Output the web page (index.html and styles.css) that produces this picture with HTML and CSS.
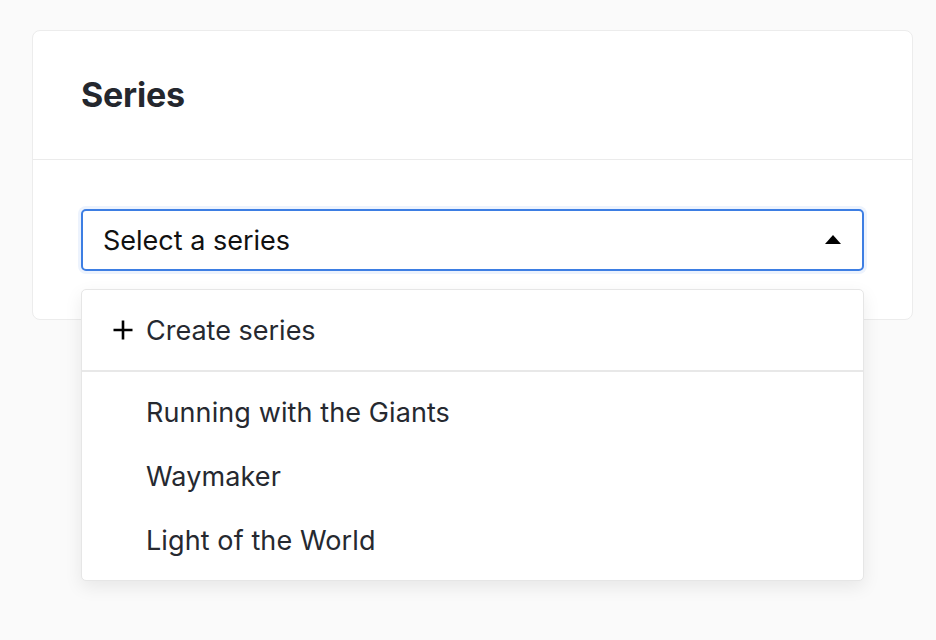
FILE: index.html
```html
<!DOCTYPE html>
<html>
<head>
<meta charset="utf-8">
<link rel="stylesheet" href="styles.css">
</head>
<body>
<div class="page">
  <div class="card">
    <div class="card-header"><h2 class="title">Series</h2></div>
    <div class="card-body">
      <div class="select-wrap">
        <div class="select">
          <span class="select-label">Select a series</span>
          <svg class="caret" width="16" height="9" viewBox="0 0 16 9"><path d="M0 9 L8 0 L16 9 Z" fill="#000"/></svg>
        </div>
        <div class="menu">
          <div class="menu-create">
            <svg class="plus" width="20" height="20" viewBox="0 0 20 20"><path d="M10 0.5v19M0.5 10h19" stroke="#000" stroke-width="2.6" fill="none"/></svg>
            <span>Create series</span>
          </div>
          <ul class="menu-list">
            <li class="menu-item">Running with the Giants</li>
            <li class="menu-item">Waymaker</li>
            <li class="menu-item">Light of the World</li>
          </ul>
        </div>
      </div>
    </div>
  </div>
</div>
</body>
</html>
```
FILE: styles.css
```css
* { box-sizing: border-box; }
html, body { margin: 0; padding: 0; }
body {
  background: #fafafa;
  font-family: Inter, "Helvetica Neue", Arial, sans-serif;
  color: #262930;
  min-height: 640px;
}
.page { padding: 30px 23px 0 32px; min-height: 640px; }
.card {
  width: 881px;
  background: #fff;
  border: 1px solid #ececec;
  border-radius: 8px;
}
.card-header {
  height: 129px;
  padding: 0 48px;
  display: flex;
  align-items: center;
  border-bottom: 1px solid #ebebeb;
}
.title {
  margin: 0;
  font-size: 34px;
  font-weight: 700;
  color: #24272e;
  letter-spacing: -0.2px;
  padding-bottom: 2px;
}
.card-body { padding: 49px 48px 48px; }
.select-wrap { position: relative; }
.select {
  height: 62px;
  border: 2px solid #3d7ee3;
  border-radius: 5px;
  box-shadow: 0 0 0 3px #edf3fd;
  display: flex;
  align-items: center;
  justify-content: space-between;
  padding: 0 20px 0 20px;
  background: #fff;
}
.select-label { font-size: 27px; color: #111; }
.caret { margin-right: 1px; margin-top: -2px; }
.menu {
  position: absolute;
  left: 0; right: 0;
  top: 80px;
  z-index: 5;
  background: #fff;
  border: 1px solid #e6e6e6;
  border-radius: 5px;
  box-shadow: 0 6px 18px rgba(0,0,0,0.08);
}
.menu-create {
  height: 82px;
  display: flex;
  align-items: center;
  gap: 13px;
  padding-left: 31px;
  font-size: 27px;
  color: #262930;
  border-bottom: 2px solid #e8e8e8;
}
.plus { flex: none; }
.menu-list { list-style: none; margin: 0; padding: 8px 0 8px; }
.menu-item {
  height: 64px;
  display: flex;
  align-items: center;
  padding-left: 64px;
  font-size: 27px;
  letter-spacing: 0.1px;
  color: #262930;
}
```
